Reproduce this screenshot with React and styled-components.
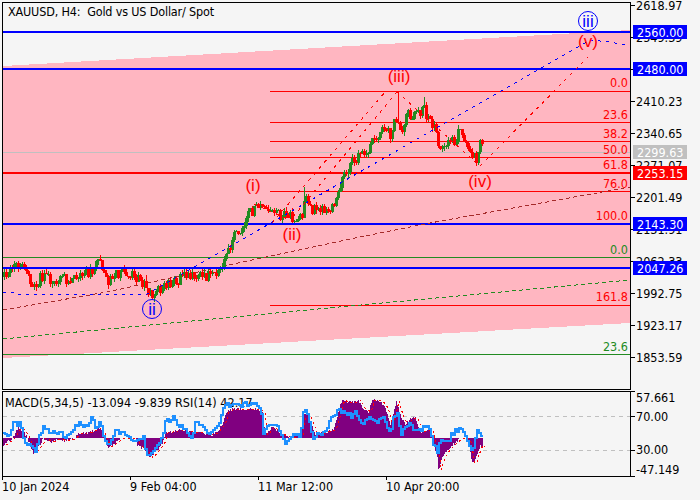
import React, { useMemo } from 'react';
import styled, { createGlobalStyle } from 'styled-components';

const GlobalStyle = createGlobalStyle`
  html, body {
    margin: 0;
    background: #f5f5f5;
    font-family: "DejaVu Sans Condensed", "Liberation Sans", Arial, sans-serif;
    font-size: 12.5px;
    color: #000;
  }
`;

const Terminal = styled.div`
  width: 700px;
  height: 500px;
  box-sizing: border-box;
  padding: 2px 0 0 2px;
  overflow: hidden;
  background: #f5f5f5;
  display: grid;
  grid-template-columns: 629px 1fr;
  grid-template-rows: 388px 86px 1fr;
  row-gap: 1px;
`;

const Pane = styled.div`
  position: relative;
  box-sizing: border-box;
  border: 1px solid #000;
`;

const Drawing = styled.svg`
  position: relative;
  z-index: 1;
  display: block;
  width: 627px;
  height: ${(p) => p.$h}px;
`;

const ChartTitle = styled.div`
  position: absolute;
  z-index: 2;
  left: 5px;
  top: 1px;
  line-height: 16px;
  white-space: pre;
  letter-spacing: -0.17px;
`;

const IndicatorTitle = styled.div`
  position: absolute;
  left: 2px;
  top: 3px;
  line-height: 16px;
  white-space: pre;
  letter-spacing: 0.05px;
`;

const FiboText = styled.text`
  fill: ${(p) => p.$color};
  font-size: 12.5px;
  text-anchor: end;
  dominant-baseline: central;
`;

const WaveText = styled.text`
  fill: ${(p) => p.$color || '#ff0000'};
  font-family: "Liberation Sans", Arial, sans-serif;
  font-size: 17px;
  text-anchor: middle;
  dominant-baseline: central;
`;

const PriceScale = styled.div`
  position: relative;
`;

const ScaleTicks = styled.div`
  margin-top: -13px;
`;

const ScaleRow = styled.div`
  height: 32px;
  line-height: 10px;
  display: flex;
  align-items: center;
  gap: 1px;
`;

const ScalePrice = styled.span`
  padding-top: 2px;
`;

const TickMark = styled.i`
  display: block;
  width: 4px;
  height: 1px;
  background: #000;
`;

const PriceTag = styled.div`
  position: absolute;
  left: 2px;
  top: ${(p) => p.$y - 2}px;
  width: 54px;
  height: 14px;
  box-sizing: border-box;
  padding-left: 4px;
  background: ${(p) => p.$bg};
  color: #fff;
  line-height: 15px;
`;

const IndicatorScale = styled.div`
  position: relative;
  &::before,
  &::after {
    content: '';
    position: absolute;
    left: 0;
    width: 4px;
    height: 1px;
    background: #000;
  }
  &::before {
    top: 0;
  }
  &::after {
    bottom: 0;
  }
`;

const IndicatorRow = styled.div`
  height: 14px;
  margin-top: ${(p) => p.$gap}px;
  display: flex;
  align-items: center;
  gap: 1px;
  line-height: 14px;
`;

const ScaleValue = styled.span`
  margin-left: ${(p) => (p.$bare ? 5 : 0)}px;
`;

const TimeAxis = styled.div`
  grid-column: 1 / -1;
  margin-top: -2px;
  display: flex;
`;

const TimeCell = styled.div`
  position: relative;
  width: 128px;
  padding-top: 3px;
  line-height: 16px;
  white-space: nowrap;
  &::before {
    content: '';
    position: absolute;
    left: 0;
    top: 0;
    width: 1px;
    height: 4px;
    background: #000;
  }
`;

const GREEN = '#228b22';
const RED = '#ff0000';
const BLUE = '#0000ff';
const BROWN = '#a52a2a';
const PURPLE = '#800080';

const scaleTicks = [
  '2618.97', '2549.39', '2479.81', '2410.23', '2340.65', '2271.07',
  '2201.49', '2131.91', '2062.33', '1992.75', '1923.17', '1853.59',
];

const priceTags = [
  { y: 25, text: '2560.00', bg: BLUE },
  { y: 62, text: '2480.00', bg: BLUE },
  { y: 145, text: '2299.63', bg: '#c0c0c0' },
  { y: 166, text: '2253.15', bg: RED },
  { y: 217, text: '2143.30', bg: BLUE },
  { y: 261, text: '2047.26', bg: BLUE },
];

const fiboLabels = [
  { y: 82, text: '0.0', color: RED },
  { y: 114, text: '23.6', color: RED },
  { y: 133, text: '38.2', color: RED },
  { y: 149, text: '50.0', color: RED },
  { y: 164, text: '61.8', color: RED },
  { y: 183, text: '76.0', color: RED },
  { y: 215, text: '100.0', color: RED },
  { y: 249, text: '0.0', color: GREEN },
  { y: 296, text: '161.8', color: RED },
  { y: 346, text: '23.6', color: GREEN },
];

const waveLabels = [
  { x: 253, y: 185, text: '(i)' },
  { x: 292, y: 234, text: '(ii)' },
  { x: 399, y: 76, text: '(iii)' },
  { x: 480, y: 181, text: '(iv)' },
  { x: 588, y: 41, text: '(v)' },
];

const timeLabels = ['10 Jan 2024', '9 Feb 04:00', '11 Mar 12:00', '10 Apr 20:00'];

const fiboLines = [91, 122, 141, 157, 191, 223, 305];

// price path in chart pixels, read off the screenshot
const pricePath = [
  [3, 277], [7, 272], [13, 265], [20, 266], [24, 270], [30, 283], [33, 286], [42, 274], [50, 280],
  [62, 277], [65, 283], [75, 277], [90, 271], [98, 264], [103, 270], [108, 282], [115, 273], [128, 273],
  [135, 278], [143, 283], [146, 290], [150, 294], [155, 292], [165, 285], [175, 280], [190, 275],
  [200, 277], [210, 275], [220, 270], [223, 258], [228, 250], [232, 240], [235, 228], [240, 232],
  [245, 218], [252, 210], [254, 204], [262, 207], [270, 206], [275, 212], [280, 215], [290, 217],
  [295, 218], [301, 216], [303, 196], [310, 209], [320, 212], [328, 209], [335, 202], [338, 190],
  [341, 172], [345, 172], [350, 160], [360, 155], [365, 158], [370, 140], [375, 135], [385, 130],
  [390, 135], [392, 122], [396, 115], [398, 124], [402, 130], [405, 113], [410, 116], [418, 113],
  [423, 110], [428, 120], [432, 125], [436, 140], [438, 155], [445, 145], [455, 140], [458, 131],
  [462, 135], [468, 150], [472, 158], [476, 160], [479, 143], [482, 150], [483, 158],
];

const wickSpikes = { 13: 261, 97: 259, 145: 275, 303: 187, 397: 91, 423: 97, 459: 129, 479: 139 };

const histogramPath = [
  [3, 445], [10, 440], [12, 438], [18, 428], [22, 430], [27, 438], [33, 453], [40, 445], [43, 438],
  [50, 442], [58, 439], [65, 441], [72, 439], [78, 434], [90, 432], [100, 427], [104, 438], [108, 447],
  [115, 443], [120, 438], [135, 438], [137, 445], [145, 450], [150, 458], [157, 450], [163, 441],
  [165, 433], [180, 430], [190, 432], [200, 433], [212, 435], [216, 432], [222, 425], [226, 412],
  [232, 409], [258, 409], [262, 413], [265, 435], [272, 427], [280, 434], [290, 438], [300, 435],
  [303, 415], [306, 412], [310, 422], [315, 435], [325, 432], [333, 430], [337, 417], [340, 405],
  [342, 400], [346, 403], [350, 402], [356, 402], [358, 400], [362, 408], [368, 412], [372, 400],
  [380, 401], [385, 408], [390, 425], [394, 410], [396, 401], [400, 415], [405, 425], [410, 418],
  [415, 418], [420, 432], [430, 430], [432, 438], [433, 445], [437, 458], [438, 470], [442, 458],
  [447, 450], [452, 445], [456, 442], [459, 438], [466, 438], [468, 442], [472, 463], [474, 463],
  [476, 455], [480, 445], [482, 447],
];

const rsiPath = [
  [3, 435], [10, 437], [13, 423], [20, 425], [23, 440], [30, 447], [35, 452], [38, 440], [43, 428],
  [50, 433], [60, 432], [63, 438], [70, 435], [78, 423], [83, 428], [92, 418], [95, 427], [100, 420],
  [102, 437], [108, 447], [115, 432], [125, 433], [132, 440], [138, 442], [143, 435], [145, 450],
  [150, 457], [157, 447], [162, 437], [165, 422], [173, 418], [178, 425], [183, 427], [192, 438],
  [195, 423], [203, 427], [208, 437], [213, 430], [220, 422], [223, 407], [230, 405], [240, 405],
  [253, 402], [257, 408], [262, 413], [263, 433], [270, 423], [277, 427], [285, 443], [292, 435],
  [300, 435], [303, 410], [306, 410], [312, 437], [322, 433], [337, 410], [352, 417], [355, 412],
  [362, 427], [367, 418], [375, 423], [383, 418], [390, 433], [393, 418], [397, 415], [400, 435],
  [408, 423], [417, 432], [422, 428], [428, 427], [432, 442], [437, 452], [440, 442], [448, 440],
  [455, 430], [463, 430], [468, 443], [472, 452], [477, 432], [480, 434], [482, 440],
];

const bluePath = '3,292 16,292 17,294 110,294 147,294 590,40 610,42 630,46';
const brownPath = '3,310 107,292 243,262 350,239 430,223 630,187';
const greenPath = '3,339 350,306 630,280';

const redDashes = [
  'M272 223L386 91',
  'M293 217L397 92',
  'M254 204L290 220',
  'M397 92L480 166',
  'M480 166L588 57',
];

const interpolate = (points, x) => {
  for (let i = 1; i < points.length; i += 1) {
    if (x <= points[i][0]) {
      const [x0, y0] = points[i - 1];
      const [x1, y1] = points[i];
      return y0 + ((y1 - y0) * (x - x0)) / (x1 - x0);
    }
  }
  return points[points.length - 1][1];
};

const makeRandom = (seed) => {
  let s = seed;
  return () => {
    s = (s * 16807) % 2147483647;
    return s / 2147483647;
  };
};

const buildCandles = () => {
  const rnd = makeRandom(4711);
  const paths = { up: '', down: '' };
  let open = pricePath[0][1];
  for (let x = 3; x <= 482; x += 2) {
    const close = Math.round(interpolate(pricePath, x) + (rnd() - 0.5) * 11);
    const top = Math.min(open, close);
    const bottom = Math.max(open, close);
    const high = wickSpikes[x] || Math.round(top - rnd() * 4);
    const low = Math.round(bottom + rnd() * 4);
    const key = close <= open ? 'up' : 'down';
    const height = Math.max(bottom - top, 1);
    paths[key] += `M${x + 1} ${high}h1V${low}h-1zM${x} ${top}h3v${height}h-3z`;
    open = close;
  }
  return paths;
};

const buildHistogram = () => {
  const rnd = makeRandom(99);
  let d = '';
  for (let x = 3; x <= 482; x += 1) {
    const base = Math.round(interpolate(histogramPath, x));
    if (base !== 438) {
      const y = base + Math.round((rnd() - 0.5) * 3 * Math.sign(438 - base));
      d += `M${x} 438h1V${y}h-1z`;
    }
  }
  return d;
};

const buildRsi = () => {
  const rnd = makeRandom(321);
  const pts = [];
  for (let x = 3; x <= 482; x += 2) {
    const y = Math.round(interpolate(rsiPath, x) + (rnd() - 0.5) * 5);
    pts.push(`${x},${y} ${x + 2},${y}`);
  }
  return pts.join(' ');
};

const PriceChart = () => {
  const candles = useMemo(buildCandles, []);
  return (
    <Drawing viewBox="3 3 627 386" $h={386} shapeRendering="crispEdges">
      <polygon points="3,66 630,30 630,323 3,358" fill="#ffb6c1" />
      <line x1="3" x2="630" y1="152.5" y2="152.5" stroke="#c0c0c0" />
      <line x1="3" x2="630" y1="257.5" y2="257.5" stroke={GREEN} />
      <line x1="3" x2="630" y1="354.5" y2="354.5" stroke={GREEN} />
      {fiboLines.map((y) => (
        <line key={y} x1="270" x2="630" y1={y + 0.5} y2={y + 0.5} stroke={RED} />
      ))}
      <line x1="3" x2="630" y1="32" y2="32" stroke={BLUE} strokeWidth="2" />
      <line x1="3" x2="630" y1="69" y2="69" stroke={BLUE} strokeWidth="2" />
      <line x1="3" x2="630" y1="173" y2="173" stroke={RED} strokeWidth="2" />
      <line x1="3" x2="630" y1="224" y2="224" stroke={BLUE} strokeWidth="2" />
      <polyline points={brownPath} fill="none" stroke={BROWN} strokeDasharray="4 3" />
      <polyline points={greenPath} fill="none" stroke={GREEN} strokeDasharray="4 3" />
      <path d={candles.up} fill={GREEN} />
      <path d={candles.down} fill={RED} />
      <line x1="3" x2="630" y1="268" y2="268" stroke={BLUE} strokeWidth="2" />
      <polyline points={bluePath} fill="none" stroke={BLUE} strokeDasharray="3 5" />
      {redDashes.map((d) => (
        <path key={d} d={d} fill="none" stroke={RED} strokeDasharray="3 5" />
      ))}
      <circle cx="152" cy="309" r="9.5" fill="none" stroke={BLUE} shapeRendering="auto" />
      <circle cx="588" cy="21" r="9.5" fill="none" stroke={BLUE} shapeRendering="auto" />
      {fiboLabels.map((l) => (
        <FiboText key={l.y} x="628" y={l.y} $color={l.color}>{l.text}</FiboText>
      ))}
      {waveLabels.map((l) => (
        <WaveText key={l.text} x={l.x} y={l.y}>{l.text}</WaveText>
      ))}
      <WaveText x="152" y="309" $color={BLUE}>ii</WaveText>
      <WaveText x="588" y="21" $color={BLUE}>iii</WaveText>
    </Drawing>
  );
};

const IndicatorChart = () => {
  const histogram = useMemo(buildHistogram, []);
  const rsi = useMemo(buildRsi, []);
  const signal = histogramPath.map(([x, y]) => `${x + 3},${y}`).join(' ');
  return (
    <Drawing viewBox="3 392 627 84" $h={84} shapeRendering="crispEdges">
      <line x1="3" x2="630" y1="416.5" y2="416.5" stroke="#c0c0c0" strokeDasharray="4 4" />
      <line x1="3" x2="630" y1="450.5" y2="450.5" stroke="#c0c0c0" strokeDasharray="4 4" />
      <path d={histogram} fill={PURPLE} />
      <polyline points={signal} fill="none" stroke={RED} strokeDasharray="2 3" />
      <polyline points={rsi} fill="none" stroke="#1e90ff" strokeWidth="2" />
    </Drawing>
  );
};

const App = () => (
  <Terminal>
    <GlobalStyle />
    <Pane>
      <ChartTitle>XAUUSD, H4:  Gold vs US Dollar/ Spot</ChartTitle>
      <PriceChart />
    </Pane>
    <PriceScale>
      <ScaleTicks>
        {scaleTicks.map((t) => (
          <ScaleRow key={t}>
            <TickMark />
            <ScalePrice>{t}</ScalePrice>
          </ScaleRow>
        ))}
      </ScaleTicks>
      {priceTags.map((t) => (
        <PriceTag key={t.text} $y={t.y} $bg={t.bg}>
          {t.text}
        </PriceTag>
      ))}
    </PriceScale>
    <Pane>
      <IndicatorTitle>MACD(5,34,5) -13.094 -9.839 RSI(14) 42.17</IndicatorTitle>
      <IndicatorChart />
    </Pane>
    <IndicatorScale>
      <IndicatorRow $gap={0}><ScaleValue $bare>57.661</ScaleValue></IndicatorRow>
      <IndicatorRow $gap={4.5}><TickMark /><ScaleValue>70.00</ScaleValue></IndicatorRow>
      <IndicatorRow $gap={19.5}><TickMark /><ScaleValue>30.00</ScaleValue></IndicatorRow>
      <IndicatorRow $gap={5.5}><ScaleValue $bare>-47.149</ScaleValue></IndicatorRow>
    </IndicatorScale>
    <TimeAxis>
      {timeLabels.map((t) => (
        <TimeCell key={t}>{t}</TimeCell>
      ))}
    </TimeAxis>
  </Terminal>
);

export default App;
